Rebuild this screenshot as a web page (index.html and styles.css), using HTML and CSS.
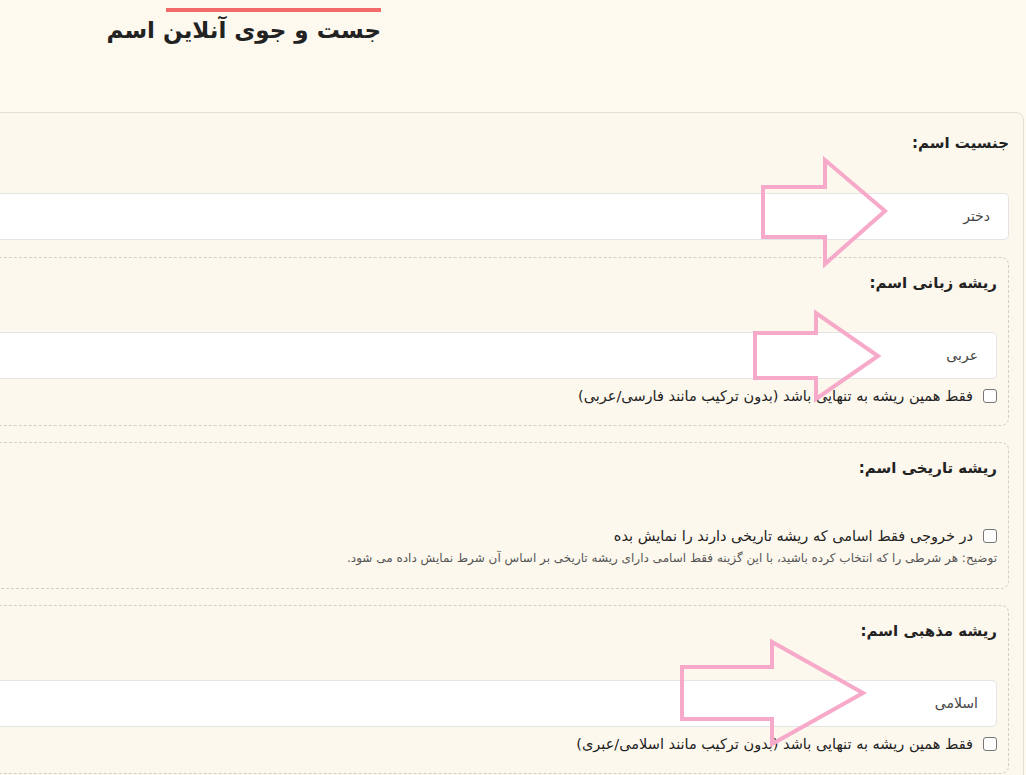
FILE: index.html
```html
<!DOCTYPE html>
<html lang="fa" dir="rtl">
<head>
<meta charset="utf-8">
<title>جست و جوی آنلاین اسم</title>
<link rel="stylesheet" href="styles.css">
</head>
<body>
<header class="head">
  <h1 class="title">جست و جوی آنلاین اسم</h1>
</header>
<main class="panel">
  <section class="field">
    <div class="label">جنسیت اسم:</div>
    <div class="select">دختر</div>
  </section>
  <section class="field boxed">
    <div class="label">ریشه زبانی اسم:</div>
    <div class="select">عربی</div>
    <label class="check"><input type="checkbox"><span>فقط همین ریشه به تنهایی باشد (بدون ترکیب مانند فارسی/عربی)</span></label>
  </section>
  <section class="field boxed hist">
    <div class="label">ریشه تاریخی اسم:</div>
    <label class="check"><input type="checkbox"><span>در خروجی فقط اسامی که ریشه تاریخی دارند را نمایش بده</span></label>
    <p class="note">توضیح: هر شرطی را که انتخاب کرده باشید، با این گزینه فقط اسامی دارای ریشه تاریخی بر اساس آن شرط نمایش داده می شود.</p>
  </section>
  <section class="field boxed">
    <div class="label">ریشه مذهبی اسم:</div>
    <div class="select">اسلامی</div>
    <label class="check"><input type="checkbox"><span>فقط همین ریشه به تنهایی باشد (بدون ترکیب مانند اسلامی/عبری)</span></label>
  </section>
</main>
<svg class="marks" width="1026" height="775" viewBox="0 0 1026 775" aria-hidden="true">
  <polygon points="763,187 825,187 825,160 885,211 825,264 825,237 763,237" />
  <polygon points="755,333 816,333 816,313 878,356 816,399 816,378 755,378" />
  <polygon points="682,667 772,667 772,642 863,693 772,744 772,719 682,719" />
</svg>
</body>
</html>
```
FILE: styles.css
```css
html, body {
  margin: 0;
  padding: 0;
}
body {
  background: #fef9ef;
  font-family: "DejaVu Sans", sans-serif;
  color: #222;
  overflow: hidden;
  width: 1026px;
  height: 775px;
  position: relative;
}
.head {
  padding: 8px 645px 0 0;
  height: 112px;
  box-sizing: border-box;
}
.title {
  margin: 0;
  font-size: 23px;
  font-weight: bold;
  line-height: 32px;
  color: #222;
  display: inline-block;
}
.title::before {
  content: "";
  display: block;
  width: 215px;
  height: 4px;
  background: #f26a6a;
  margin-bottom: 2px;
}
.panel {
  margin: 0 2px 0 -700px;
  background: #fdf8ed;
  border: 1px solid #e3e0d9;
  border-radius: 8px;
  padding: 0 14px 0 0;
}
.field {
  padding-top: 20px;
  margin-bottom: 17px;
}
.field.boxed {
  border: 1px dashed #d3cfc8;
  border-radius: 8px;
  padding: 15px 11px 19px 0;
  margin-bottom: 16px;
}
.field.boxed.hist {
  padding-bottom: 22px;
}
.label {
  font-size: 15px;
  font-weight: bold;
  line-height: 20px;
  color: #222;
}
.select {
  margin-top: 40px;
  height: 45px;
  background: #fff;
  border: 1px solid #e4e4e4;
  border-radius: 5px;
  font-size: 14px;
  line-height: 45px;
  padding-right: 18px;
  color: #444;
}
.boxed .select {
  margin-top: 39px;
}
.check {
  display: flex;
  align-items: center;
  gap: 10px;
  margin-top: 7px;
  height: 20px;
  font-size: 14.5px;
  color: #222;
}
.check input {
  appearance: none;
  -webkit-appearance: none;
  width: 14px;
  height: 14px;
  margin: 0;
  border: 1.5px solid #777;
  border-radius: 3px;
  background: #fff;
  box-sizing: border-box;
  flex: none;
}
.hist .check {
  margin-top: 48px;
}
.note {
  margin: 4px 0 0;
  font-size: 12px;
  line-height: 16px;
  color: #555;
}
.marks {
  position: absolute;
  top: 0;
  left: 0;
  pointer-events: none;
}
.marks polygon {
  fill: none;
  stroke: #f7a9c9;
  stroke-width: 4;
  stroke-linejoin: miter;
}
```
